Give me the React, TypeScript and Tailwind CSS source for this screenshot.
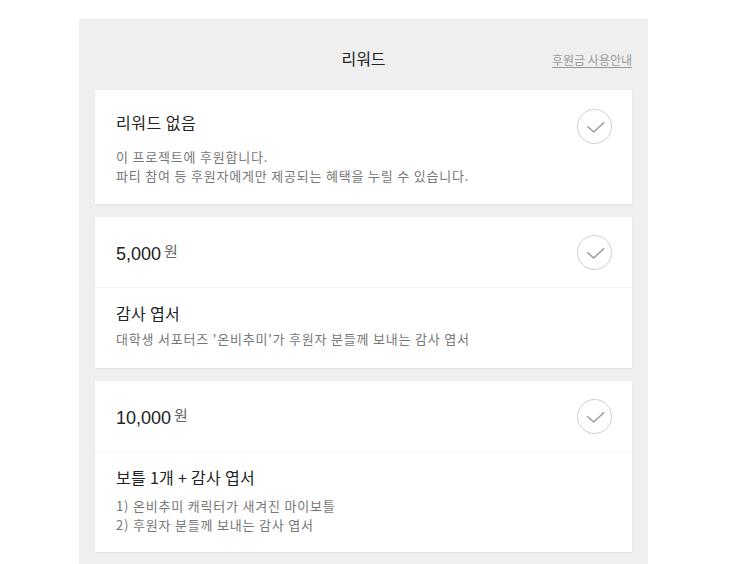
import type { ReactNode } from "react";

const KR = "font-['Noto_Sans_CJK_KR',sans-serif]";

function CheckCircle() {
  return (
    <div className="flex h-[35px] w-[35px] shrink-0 items-center justify-center rounded-full border border-[#cfcfcf] bg-white">
      <svg width="35" height="35" viewBox="0 0 35 35" fill="none" className="-m-px">
        <path d="M10.7 17.7 L16.7 23 L26.7 13.7" stroke="#9a9a9a" strokeWidth="1.5" strokeLinecap="round" strokeLinejoin="round" />
      </svg>
    </div>
  );
}

function Price({ amount }: { amount: string }) {
  return (
    <div className="flex items-start pt-[3px]">
      <span className="font-['Liberation_Sans',Arial,sans-serif] text-[18px] leading-[24px] text-[#222]">{amount}</span>
      <span className={`${KR} ml-[3px] mt-[-1px] text-[15px] leading-[20px] text-[#666]`}>원</span>
    </div>
  );
}

function RewardCard({
  amount,
  title,
  lines,
  descClass,
  bodyClass,
}: {
  amount: string;
  title: string;
  lines: ReactNode[];
  descClass: string;
  bodyClass: string;
}) {
  return (
    <div className="bg-white shadow-[0_1px_2px_rgba(0,0,0,0.06)]">
      <div className="flex h-[71px] items-center justify-between border-b border-[#f3f3f3] pl-[21px] pr-5">
        <Price amount={amount} />
        <CheckCircle />
      </div>
      <div className={`pl-[21px] pr-5 pt-[13px] ${bodyClass}`}>
        <div className="text-[16px] leading-[24px] tracking-[0.3px] text-[#222]">{title}</div>
        <div className={`text-[13px] tracking-[0.8px] text-[#777] ${descClass}`}>
          {lines.map((l, i) => (
            <div key={i}>{l}</div>
          ))}
        </div>
      </div>
    </div>
  );
}

export default function App() {
  return (
    <div className={`${KR} min-h-[564px] bg-white pt-[19px]`}>
      <div className="ml-[79px] min-h-[545px] w-[569px] bg-[#efefef] px-4 pb-4">
        <div className="relative h-[71px] pt-[27px] text-center">
          <div className="text-[16px] leading-[24px] text-[#222]">리워드</div>
          <a className="absolute right-0 top-[33px] text-[12px] leading-[16px] text-[#999] underline underline-offset-2" href="#">
            후원금 사용안내
          </a>
        </div>

        <div className="flex flex-col gap-[13px]">
          <div className="bg-white pb-[19px] pl-[21px] pr-5 pt-[19px] shadow-[0_1px_2px_rgba(0,0,0,0.06)]">
            <div className="flex items-start justify-between">
              <div className="pt-px">
                <div className="text-[16px] leading-[24px] tracking-[0.5px] text-[#222]">리워드 없음</div>
                <div className="mt-[13px] text-[13px] leading-[19px] tracking-[0.8px] text-[#777]">
                  <div>이 프로젝트에 후원합니다.</div>
                  <div>파티 참여 등 후원자에게만 제공되는 혜택을 누릴 수 있습니다.</div>
                </div>
              </div>
              <CheckCircle />
            </div>
          </div>

          <RewardCard
            amount="5,000"
            title="감사 엽서"
            bodyClass="pb-[20px]"
            descClass="mt-[4px] leading-[19px]"
            lines={["대학생 서포터즈 '온비추미'가 후원자 분들께 보내는 감사 엽서"]}
          />

          <RewardCard
            amount="10,000"
            title="보틀 1개 + 감사 엽서"
            bodyClass="pb-[18px]"
            descClass="mt-[8px] leading-[18.5px]"
            lines={["1) 온비추미 캐릭터가 새겨진 마이보틀", "2) 후원자 분들께 보내는 감사 엽서"]}
          />
        </div>
      </div>
    </div>
  );
}
